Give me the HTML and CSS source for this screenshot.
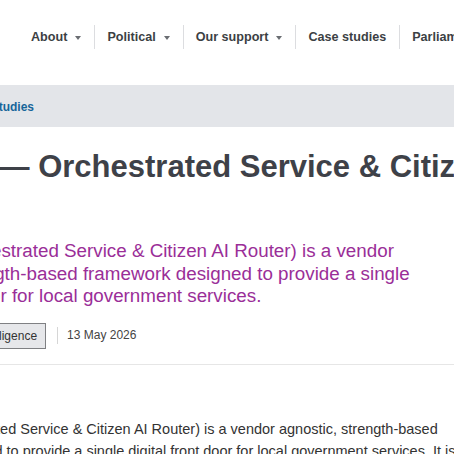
FILE: index.html
```html
<!DOCTYPE html>
<html lang="en">
    <head>
        <meta charset="UTF-8">
        <title>OSCAR — Case study</title>
        <link rel="stylesheet" href="styles.css">
    </head>
    <body>
        <header class="header">
            <nav class="nav">
                <a class="nav-item" href="#">About <span class="caret"></span></a>
                <a class="nav-item" href="#">Political <span class="caret"></span></a>
                <a class="nav-item" href="#">Our support <span class="caret"></span></a>
                <a class="nav-item" href="#">Case studies</a>
                <a class="nav-item" href="#">Parliament</a>
            </nav>
        </header>
        <div class="crumbs">
            <div class="page">
                <a class="crumb" href="#">Case studies</a>
            </div>
        </div>
        <main class="page">
            <h1 class="title">OSCAR — Orchestrated Service &amp; Citizen AI Router</h1>
            <p class="lead">
                OSCAR (Orchestrated Service &amp; Citizen AI Router) is a vendor
                agnostic, strength-based framework designed to provide a single
                digital front door for local government services.
            </p>
            <div class="meta">
                <a class="tag" href="#">Artificial Intelligence</a>
                <span class="date">13 May 2026</span>
            </div>
        </main>
        <hr class="rule">
        <div class="page">
            <p class="body">
                OSCAR (Orchestrated Service &amp; Citizen AI Router) is a vendor agnostic, strength-based
                framework designed to provide a single digital front door for loc<span class="mark">al government se</span>rvices. It is
                built around the strengths of each council.
            </p>
        </div>
    </body>
</html>
```

FILE: styles.css
```css
html, body {
    overflow: hidden;
}
body {
    margin: 0;
    background-color: white;
    color: #333;
    font-family: "Liberation Sans", Arial, sans-serif;
}

.header {
    height: 85px;
    padding-top: 25px;
    box-sizing: border-box;
}
.nav {
    display: flex;
    padding-left: 18px;
    white-space: nowrap;
}
.nav-item {
    display: flex;
    align-items: center;
    gap: 8px;
    height: 24px;
    padding: 0 13px 0 12px;
    border-left: 1px solid #dcdde0;
    color: #3c3f44;
    font-size: 12.6px;
    font-weight: bold;
    text-decoration: none;
}
.nav-item:first-child {
    border-left: none;
    padding-left: 13px;
}
.caret {
    width: 0;
    height: 0;
    border-left: 3.5px solid transparent;
    border-right: 3.5px solid transparent;
    border-top: 4px solid #6a6d72;
    margin-top: 1px;
}

.page {
    margin-left: -128px;
    width: 640px;
}

.crumbs {
    height: 42px;
    background-color: #e3e5e9;
    display: flex;
    align-items: center;
}
.crumb {
    margin-left: 88px;
    color: #17659a;
    font-size: 12px;
    font-weight: bold;
    text-decoration: none;
}

.title {
    margin: 22px 0 0 6px;
    color: #3e4148;
    font-size: 31px;
    line-height: 36px;
    white-space: nowrap;
}
.lead {
    margin: 55px 0 0;
    width: 570px;
    color: #9a2e98;
    font-size: 18.8px;
    line-height: 22.5px;
}
.meta {
    display: flex;
    align-items: center;
    margin-top: 15px;
    margin-left: 51px;
}
.tag {
    padding: 5px 8px 5px 7px;
    border: 1px solid #7f8083;
    background-color: #e6e7ea;
    color: #333;
    font-size: 12px;
    text-decoration: none;
}
.date {
    margin-left: 11px;
    padding-left: 9px;
    border-left: 1px solid #d6d6d6;
    color: #444;
    font-size: 12px;
    line-height: 17px;
}

.rule {
    margin: 15px 0 0;
    border: none;
    border-top: 1px solid #e6e6e6;
}
.body {
    margin: 53px 0 0;
    width: 600px;
    color: #333;
    font-size: 14.5px;
    line-height: 22px;
}
.mark {
    border-bottom: 1px solid #555;
}
```
